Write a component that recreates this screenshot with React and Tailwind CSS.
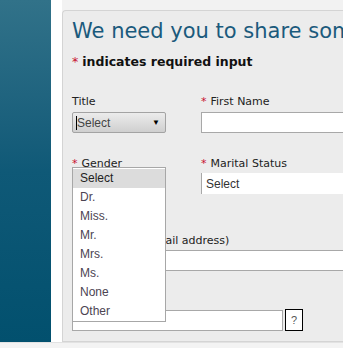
import React from "react";

const titles = ["Select", "Dr.", "Miss.", "Mr.", "Mrs.", "Ms.", "None", "Other"];

function Req() {
  return <span className="text-[#c8102e] mr-[4px]">*</span>;
}

function Label({ req, children }) {
  return (
    <div className="h-[16px] text-[11px] leading-[16px] text-[#222] font-['DejaVu_Sans',sans-serif] whitespace-nowrap">
      {req && <Req />}
      {children}
    </div>
  );
}

export default function App() {
  return (
    <div className="w-[343px] h-[348px] overflow-hidden bg-white flex flex-col font-['Liberation_Sans',Arial,sans-serif]">
      <div className="flex h-[342px]">
        {/* sidebar */}
        <div className="w-[51px] shrink-0 bg-gradient-to-b from-[#317289] via-[#0f5977] to-[#02506e]" />
        <div className="w-[11px] shrink-0 bg-white" />

        <div className="flex-1 flex flex-col bg-[#f2f2f2] min-w-0">
          <div className="h-[10px]" />
          {/* panel */}
          <div className="flex-1 bg-[#ececec] border-l border-t border-b border-[#d4d4d4] rounded-tl-[4px] pl-[9px] w-[320px]">
            <h1 className="mt-[7px] whitespace-nowrap text-[21px] leading-[26px] text-[#1b5a7c] font-['DejaVu_Sans',sans-serif]">
              We need you to share some information
            </h1>
            <p className="mt-[10px] whitespace-nowrap text-[12.5px] leading-[16px] font-bold text-[#111] font-['DejaVu_Sans',sans-serif]">
              <span className="text-[#c8102e] font-normal mr-[4px]">*</span>indicates required input
            </p>

            {/* row 1 */}
            <div className="mt-[24px] flex">
              <div className="w-[129px] shrink-0">
                <Label>Title</Label>
                <div className="mt-[2px] w-[94px] h-[21px] flex items-center border border-[#a3a3a3] rounded-[2px] bg-gradient-to-b from-[#ececec] to-[#cfcfcf]">
                  <div className="ml-[3px] w-px h-[14px] bg-black" />
                  <span className="text-[12px] text-[#444] flex-1">Select</span>
                  <span className="text-[8px] text-black mr-[5px]">▼</span>
                </div>
              </div>
              <div className="flex-1">
                <Label req>First Name</Label>
                <div className="mt-[2px] w-[200px] h-[21px] bg-white border border-[#a8a8a8]" />
              </div>
            </div>

            {/* row 2 */}
            <div className="mt-[23px] flex">
              <div className="w-[129px] shrink-0 relative">
                <Label req>Gender</Label>
                <div className="mt-[1px] w-[94px] h-[21px] bg-white border border-[#a8a8a8]" />
                <div className="absolute left-0 top-[11px] w-[94px] z-10 bg-white border border-[#a7a7a7] pt-[1px] text-[12px]">
                  {titles.map((t, i) => (
                    <div
                      key={t}
                      className={`h-[19px] leading-[19px] pl-[7px] ${i === 0 ? "bg-[#dcdcdc] text-[#222]" : "text-[#4c4452]"}`}
                    >
                      {t}
                    </div>
                  ))}
                </div>
              </div>
              <div className="flex-1">
                <Label req>Marital Status</Label>
                <div className="mt-[1px] w-[200px] h-[21px] bg-white border-l border-[#a8a8a8] flex items-center pl-[4px] text-[12px] text-[#333]">
                  Select
                </div>
              </div>
            </div>

            {/* row 3 */}
            <div className="mt-[39px]">
              <Label req>Email (your email address)</Label>
              <div className="mt-[1px] w-[320px] h-[21px] bg-white border border-[#a8a8a8]" />
            </div>

            {/* row 4 */}
            <div className="mt-[20px]">
              <Label req>Password</Label>
              <div className="mt-[2px] flex items-center">
                <div className="w-[211px] h-[21px] bg-white border border-[#a8a8a8]" />
                <div className="ml-[2px] w-[18px] h-[22px] bg-white border-[1.5px] border-black flex items-center justify-center text-[11px] text-[#555]">
                  ?
                </div>
              </div>
            </div>
          </div>
        </div>
      </div>
      <div className="flex-1 bg-[#f3f3f3] border-t border-[#e2e2e2]" />
    </div>
  );
}
